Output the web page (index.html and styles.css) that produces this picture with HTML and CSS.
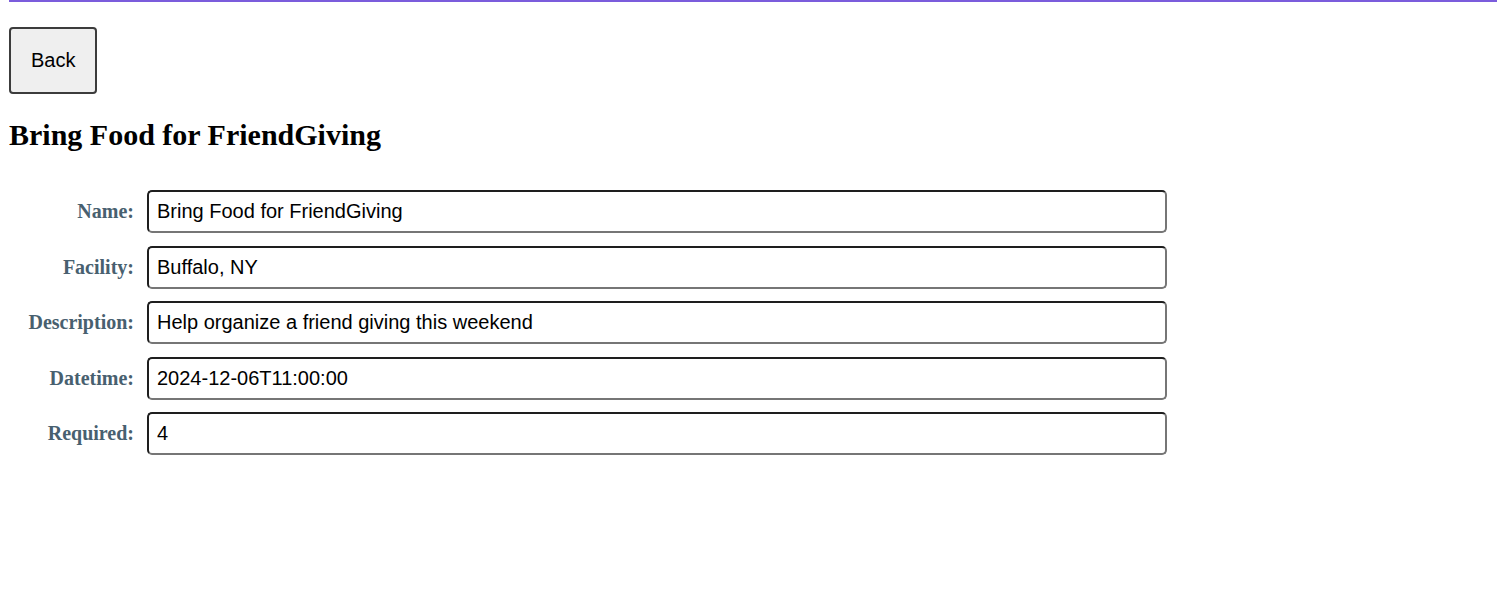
FILE: index.html
```html
<!DOCTYPE html>
<html lang="en">
<head>
<meta charset="utf-8">
<title>Bring Food for FriendGiving</title>
<link rel="stylesheet" href="styles.css">
</head>
<body>
<div class="topline"></div>
<main class="page">
  <button class="back" type="button">Back</button>
  <h2 class="title">Bring Food for FriendGiving</h2>
  <form class="details">
    <label class="lbl" for="f-name">Name:</label>
    <input class="field" id="f-name" type="text" value="Bring Food for FriendGiving">
    <label class="lbl" for="f-facility">Facility:</label>
    <input class="field" id="f-facility" type="text" value="Buffalo, NY">
    <label class="lbl" for="f-desc">Description:</label>
    <input class="field" id="f-desc" type="text" value="Help organize a friend giving this weekend">
    <label class="lbl" for="f-dt">Datetime:</label>
    <input class="field" id="f-dt" type="text" value="2024-12-06T11:00:00">
    <label class="lbl" for="f-req">Required:</label>
    <input class="field" id="f-req" type="text" value="4">
  </form>
</main>
</body>
</html>
```

FILE: styles.css
```css
html, body {
  margin: 0;
  padding: 0;
  background: #ffffff;
}

body {
  font-family: "Liberation Serif", "Times New Roman", serif;
  color: #000000;
}

.topline {
  height: 2px;
  margin-left: 9px;
  background: #7b5cdc;
}

.page {
  padding: 25px 0 0 9px;
}

.back {
  display: block;
  margin: 0;
  padding: 20px 20px;
  font-family: "Liberation Sans", Arial, sans-serif;
  font-size: 20px;
  line-height: 23px;
  color: #000000;
  background: #efefef;
  border: 2px solid #3c3c3c;
  border-radius: 4px;
}

.title {
  margin: 24px 0 0 0;
  font-size: 30px;
  font-weight: bold;
  line-height: 33px;
}

.details {
  margin-top: 39px;
  display: grid;
  grid-template-columns: 125px 1020px;
  column-gap: 13px;
  row-gap: 12.5px;
  align-items: center;
}

.lbl {
  text-align: right;
  font-weight: bold;
  font-size: 20px;
  color: #48606f;
}

.field {
  box-sizing: border-box;
  height: 43px;
  width: 1020px;
  margin: 0;
  padding: 8px 8px;
  font-family: "Liberation Sans", Arial, sans-serif;
  font-size: 20px;
  color: #000000;
  background: #ffffff;
  border: 2px solid;
  border-color: #1e1e1e #767676 #767676 #1e1e1e;
  border-radius: 5px;
  outline: none;
}
```
